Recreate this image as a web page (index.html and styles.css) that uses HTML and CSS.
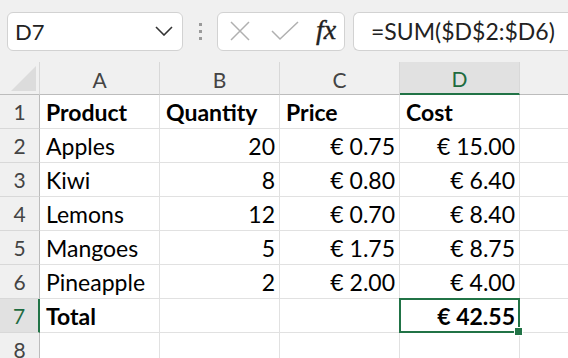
FILE: index.html
```html
<!DOCTYPE html>
<html lang="en">
<head>
    <meta charset="UTF-8">
    <title>Sheet</title>
    <link rel="stylesheet" href="styles.css">
</head>
<body>
    <div class="toolbar">
        <div class="name-box">
            <span>D7</span>
            <svg class="chevron" width="18" height="10" viewBox="0 0 18 10"><path d="M1 1 L9 9 L17 1" fill="none" stroke="#333" stroke-width="1.6"/></svg>
        </div>
        <div class="grip"><i></i><i></i><i></i></div>
        <div class="fx-box">
            <svg width="22" height="22" viewBox="0 0 22 22"><path d="M2 2 L20 20 M20 2 L2 20" stroke="#b0b0b0" stroke-width="1.5" fill="none"/></svg>
            <svg width="28" height="20" viewBox="0 0 28 20"><path d="M1 10 L9 18 L27 1" stroke="#b0b0b0" stroke-width="1.5" fill="none"/></svg>
            <span class="fx">fx</span>
        </div>
        <div class="formula">=SUM($D$2:$D6)</div>
    </div>

    <div class="sheet">
        <div class="corner"><span class="tri"></span></div>
        <div class="col-head">A</div>
        <div class="col-head">B</div>
        <div class="col-head">C</div>
        <div class="col-head active">D</div>
        <div class="col-head last"></div>
    </div>
    <div class="sheet" id="rows">
        <!-- rows are added below -->
    </div>

    <script>
    const data = [
        ['Product', 'Quantity', 'Price', 'Cost'],
        ['Apples', '20', '€ 0.75', '€ 15.00'],
        ['Kiwi', '8', '€ 0.80', '€ 6.40'],
        ['Lemons', '12', '€ 0.70', '€ 8.40'],
        ['Mangoes', '5', '€ 1.75', '€ 8.75'],
        ['Pineapple', '2', '€ 2.00', '€ 4.00'],
        ['Total', '', '', '€ 42.55'],
        ['', '', '', '']
    ];

    const rows = document.getElementById('rows');
    data.forEach((row, i) => {
        const n = i + 1;
        const bold = n === 1 || n === 7;
        let html = `<div class="row-head ${n === 7 ? 'active' : ''}">${n}</div>`;
        row.forEach((val, c) => {
            const num = c > 0 && n > 1;
            const cls = ['cell', bold ? 'bold' : '', num ? 'num' : '', (n === 7 && c === 3) ? 'selected' : ''].join(' ');
            html += `<div class="${cls}">${val}${(n === 7 && c === 3) ? '<span class="handle"></span>' : ''}</div>`;
        });
        html += `<div class="cell last"></div>`;
        rows.insertAdjacentHTML('beforeend', html);
    });
    </script>
</body>
</html>
```

FILE: styles.css
```css
body {
    margin: 0;
    width: 568px;
    height: 358px;
    overflow: hidden;
    background-color: #ffffff;
    font-family: Lato, "Liberation Sans", sans-serif;
}

.toolbar {
    display: flex;
    align-items: center;
    height: 62px;
    padding-left: 7px;
    background-color: #f0f0f0;
    box-sizing: border-box;
}

.name-box {
    display: flex;
    align-items: center;
    justify-content: space-between;
    width: 176px;
    height: 39px;
    padding: 0 9px 0 7px;
    background-color: white;
    border: 1px solid #d2d2d2;
    border-radius: 6px;
    box-sizing: border-box;
    font-size: 22px;
    color: #222;
}

.grip {
    display: flex;
    flex-direction: column;
    gap: 4px;
    margin: 0 15px 0 16px;
}

.grip i {
    display: block;
    width: 3px;
    height: 3px;
    background-color: #9a9a9a;
}

.fx-box {
    display: flex;
    align-items: center;
    width: 128px;
    height: 39px;
    padding-left: 11px;
    gap: 20px;
    background-color: white;
    border: 1px solid #d2d2d2;
    border-radius: 6px;
    box-sizing: border-box;
}

.fx {
    font-family: "Liberation Serif", "DejaVu Serif", serif;
    font-style: italic;
    font-size: 28px;
    color: #222;
    margin-left: -3px;
    margin-top: -3px;
    -webkit-text-stroke: 0.4px #222;
}

.formula {
    flex: 1;
    height: 39px;
    line-height: 37px;
    margin-left: 8px;
    padding-left: 17px;
    background-color: white;
    border: 1px solid #d2d2d2;
    border-right: none;
    border-radius: 6px 0 0 6px;
    box-sizing: border-box;
    font-size: 23px;
    color: #222;
    white-space: nowrap;
    overflow: hidden;
}

.sheet {
    display: grid;
    grid-template-columns: 40px 120px 120px 120px 120px 48px;
}

.corner, .col-head {
    height: 33px;
    background-color: #f0f0f0;
    border-bottom: 1px solid #bcbcbc;
    box-sizing: border-box;
}

.corner {
    position: relative;
    border-right: 1px solid #d8d8d8;
}

.tri {
    position: absolute;
    right: 3px;
    bottom: 3px;
    width: 0;
    height: 0;
    border-left: 25px solid transparent;
    border-bottom: 25px solid #dcdcdc;
}

.col-head {
    display: flex;
    align-items: center;
    justify-content: center;
    padding-top: 2px;
    border-right: 1px solid #d8d8d8;
    font-size: 21px;
    color: #444;
}

.col-head.active {
    background-color: #e1e1e1;
    border-bottom: 2px solid #217346;
    color: #1e6b3f;
}

.col-head.last {
    border-right: none;
}

.row-head {
    display: flex;
    align-items: center;
    justify-content: center;
    height: 34px;
    background-color: #f0f0f0;
    border-right: 1px solid #bcbcbc;
    border-bottom: 1px solid #d8d8d8;
    box-sizing: border-box;
    font-size: 21px;
    color: #444;
}

.row-head.active {
    background-color: #e1e1e1;
    border-right: 2px solid #217346;
    color: #1e6b3f;
}

.cell {
    position: relative;
    height: 34px;
    line-height: 34px;
    padding: 0 4px 0 6px;
    border-right: 1px solid #e1e1e1;
    border-bottom: 1px solid #e1e1e1;
    box-sizing: border-box;
    font-size: 23px;
    color: #000;
    white-space: nowrap;
}

.cell.last {
    border-right: none;
}

.bold {
    font-weight: bold;
}

.num {
    text-align: right;
}

.selected::after {
    content: "";
    position: absolute;
    left: -1px;
    top: -1px;
    right: -1px;
    bottom: -1px;
    border: 2px solid #217346;
}

.handle {
    position: absolute;
    right: -4px;
    bottom: -4px;
    width: 7px;
    height: 7px;
    background-color: #217346;
    border: 1px solid white;
    z-index: 1;
}
```
